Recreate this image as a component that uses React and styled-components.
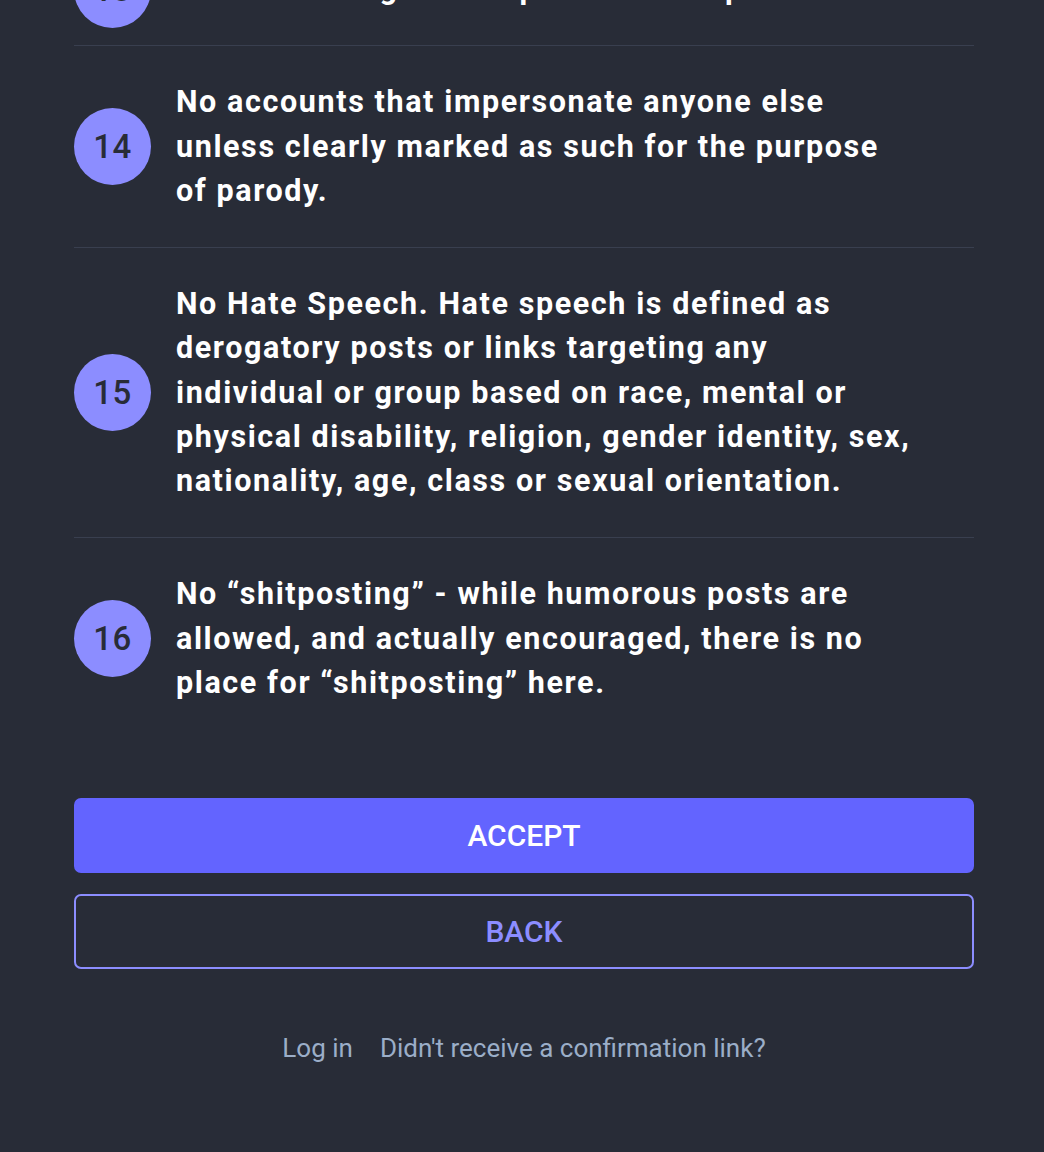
import React from 'react';
import styled, { createGlobalStyle } from 'styled-components';

const rules = [
  { id: 13, text: 'No advertising or self-promotion of products.' },
  {
    id: 14,
    text: 'No accounts that impersonate anyone else unless clearly marked as such for the purpose of parody.',
  },
  {
    id: 15,
    text: 'No Hate Speech. Hate speech is defined as derogatory posts or links targeting any individual or group based on race, mental or physical disability, religion, gender identity, sex, nationality, age, class or sexual orientation.',
  },
  {
    id: 16,
    text: 'No \u201cshitposting\u201d - while humorous posts are allowed, and actually encouraged, there is no place for \u201cshitposting\u201d here.',
  },
];

const RulesPage = () => {
  return (
    <Page>
      <GlobalStyle />
      <Content>
        <RuleList>
          {rules.map((rule) => (
            <Rule key={rule.id}>
              <Counter>{rule.id}</Counter>
              <RuleText>{rule.text}</RuleText>
            </Rule>
          ))}
        </RuleList>

        <Actions>
          <Button>Accept</Button>
          <Button outline>Back</Button>
        </Actions>

        <Links>
          <LinkItem href="#">Log in</LinkItem>
          <LinkItem href="#">Didn't receive a confirmation link?</LinkItem>
        </Links>
      </Content>
    </Page>
  );
};

export default RulesPage;

const GlobalStyle = createGlobalStyle`
  html, body {
    margin: 0;
    padding: 0;
    background: #282c37;
  }

  body {
    font-family: Roboto, "Liberation Sans", sans-serif;
    color: #fff;
    height: 1152px;
    overflow: hidden;
  }
`;

const Page = styled.div`
  width: 1044px;
  height: 1152px;
  overflow: hidden;
  background: #282c37;
`;

// page is scrolled, so the first rule sits partly above the fold
const Content = styled.div`
  margin-top: -67px;
  padding: 0 70px 0 74px;
`;

const RuleList = styled.ol`
  list-style: none;
  margin: 0;
  padding: 0;
`;

const Rule = styled.li`
  display: flex;
  align-items: center;
  gap: 25px;
  padding: 34px 62px 34px 0;
  border-bottom: 1px solid #393f4f;

  &:last-child {
    border-bottom: none;
  }
`;

// negative margins: the badge may overhang a single-line rule
const Counter = styled.span`
  flex: 0 0 77px;
  height: 77px;
  margin: -17px 0;
  border-radius: 50%;
  background: #8c8dff;
  color: #282c37;
  display: flex;
  align-items: center;
  justify-content: center;
  font-size: 33px;
  font-weight: 500;
  letter-spacing: 0.5px;
`;

const RuleText = styled.p`
  margin: 0;
  font-size: 30.5px;
  line-height: 44.25px;
  font-weight: 700;
  letter-spacing: 1.6px;
  color: #fff;
`;

const Actions = styled.div`
  display: flex;
  flex-direction: column;
  gap: 21px;
  margin-top: 59px;
`;

const Button = styled.button`
  height: 75px;
  width: 100%;
  border-radius: 7px;
  border: 2px solid ${(p) => (p.outline ? '#8c8dff' : '#6364ff')};
  background: ${(p) => (p.outline ? 'transparent' : '#6364ff')};
  color: ${(p) => (p.outline ? '#8c8dff' : '#fff')};
  font-family: Roboto, "Liberation Sans", sans-serif;
  font-size: 30px;
  font-weight: 500;
  text-transform: uppercase;
  cursor: pointer;
`;

const Links = styled.div`
  display: flex;
  justify-content: center;
  gap: 27px;
  margin-top: 62px;
`;

const LinkItem = styled.a`
  color: #9baec8;
  font-size: 26px;
  line-height: 34px;
  text-decoration: none;
`;
